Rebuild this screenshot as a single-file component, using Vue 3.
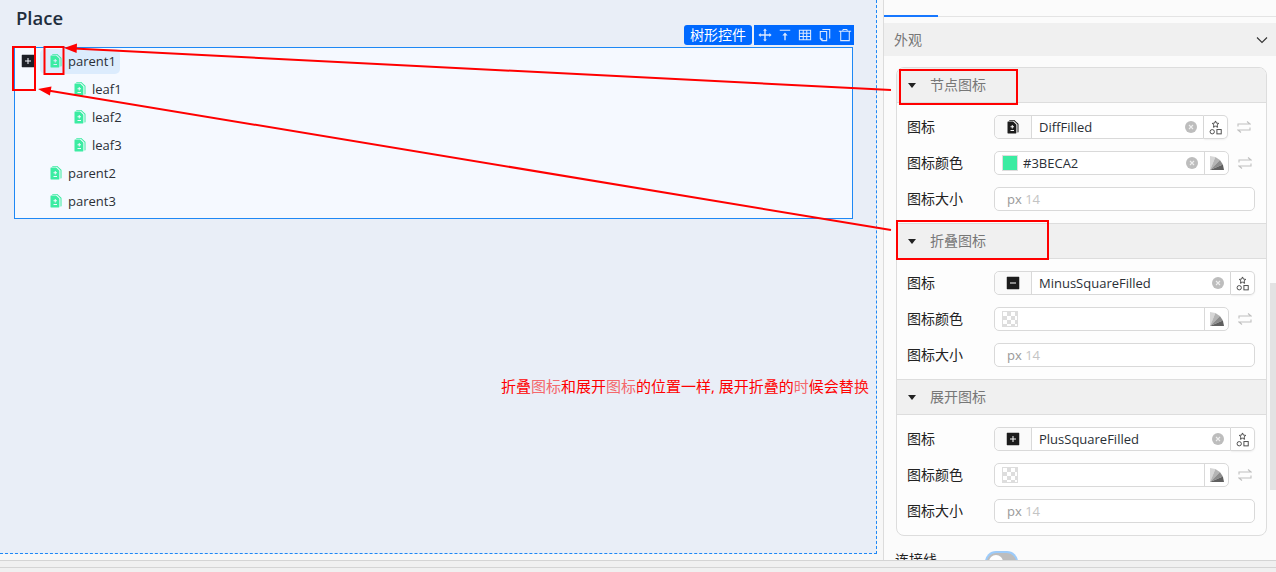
<template>
  <div class="page">
    <div class="main">
      <div class="canvas">
        <h1 class="title">Place</h1>
        <div class="tree">
          <div class="tree-tools">
            <span class="tree-name">树形控件</span>
            <div class="tool-btns">
              <svg v-for="t in tools" :key="t" viewBox="0 0 16 16" class="tool"><path :d="t" /></svg>
            </div>
          </div>
          <div v-for="node in nodes" :key="node.label" class="tree-row" :class="{ leaf: node.leaf }">
            <span class="switcher">
              <svg v-if="node.open" viewBox="64 64 896 896"><path :d="icons.plus" /></svg>
            </span>
            <span class="node" :class="{ selected: node.open }">
              <svg viewBox="64 64 896 896" class="node-icon"><path fill-rule="evenodd" :d="icons.diff" /></svg>
              {{ node.label }}
            </span>
          </div>
        </div>
        <p class="note">
          <b>折叠</b><span class="pale">图标</span><b>和展开</b><span class="pale">图标</span><b>的位置一样, 展开折叠的</b><span class="pale">时</span><b>候会替</b>换
        </p>
      </div>

      <div class="panel">
        <div class="tabs"><span class="tab-on"></span></div>
        <div class="section">
          <span>外观</span>
          <svg viewBox="0 0 12 12" class="chevron"><path d="M1 3.500l5 5 5-5" /></svg>
        </div>
        <div class="card">
          <div v-for="g in groups" :key="g.title" class="group">
            <div class="group-head"><i class="caret"></i><span>{{ g.title }}</span></div>
            <div class="group-body">
              <div class="row">
                <label>图标</label>
                <div class="input-group" :class="{ wide: !g.swap }">
                  <div class="field">
                    <span class="addon">
                      <svg viewBox="64 64 896 896"><path fill-rule="evenodd" :d="g.icon" /></svg>
                    </span>
                    <span class="value">{{ g.name }}</span>
                    <svg viewBox="0 0 12 12" class="clear"><circle cx="6" cy="6" r="6" /><path d="M4 4l4 4M8 4l-4 4" /></svg>
                  </div>
                  <span class="pick">
                    <svg viewBox="0 0 16 16" class="shapes">
                      <path d="M8 1l1 2.300 2.500.3-1.800 1.700.5 2.500L8 6.600 5.800 7.800l.5-2.500-1.800-1.700 2.500-.3z" />
                      <circle cx="4.500" cy="12.500" r="2.300" />
                      <rect x="9.500" y="10.200" width="4.600" height="4.600" />
                    </svg>
                  </span>
                </div>
                <svg v-if="g.swap" viewBox="0 0 14 14" class="swap"><path d="M1 6.500V4h12L10 1.500M13 7.500V10H1l3 2.500" /></svg>
              </div>
              <div class="row">
                <label>图标颜色</label>
                <div class="color-input">
                  <span class="swatch" :class="{ empty: !g.color }" :style="g.color ? { background: g.color } : null"></span>
                  <span class="value">{{ g.color }}</span>
                  <svg v-if="g.color" viewBox="0 0 12 12" class="clear"><circle cx="6" cy="6" r="6" /><path d="M4 4l4 4M8 4l-4 4" /></svg>
                  <span class="fan">
                    <svg viewBox="0 0 14 14">
                      <path fill="#d6d6d6" d="M0 14V0l5.400 1.100z" />
                      <path fill="#b4b4b4" d="M0 14L5.400 1.100 9.900 4.100z" />
                      <path fill="#8c8c8c" d="M0 14L9.900 4.100 12.900 8.600z" />
                      <path fill="#5f5f5f" d="M0 14L12.900 8.600 14 14z" />
                    </svg>
                  </span>
                </div>
                <svg viewBox="0 0 14 14" class="swap"><path d="M1 6.500V4h12L10 1.500M13 7.500V10H1l3 2.500" /></svg>
              </div>
              <div class="row">
                <label>图标大小</label>
                <div class="size-input">px <em>14</em></div>
              </div>
            </div>
          </div>
        </div>
        <div class="row link-row">
          <label>连接线</label>
          <span class="toggle"><i></i></span>
        </div>
        <span class="scrollbar"></span>
      </div>
    </div>
    <div class="footer"></div>

    <!-- 标注层 -->
    <svg class="marks" viewBox="0 0 1276 572">
      <g fill="none" stroke="#f00" stroke-width="2">
        <rect x="13" y="47" width="22" height="43" />
        <rect x="44.500" y="47" width="19" height="27" />
        <rect x="900" y="70" width="117" height="34" />
        <rect x="897" y="221" width="151" height="38" />
        <path d="M891 90L74 48.500M891 230L48 90.500" />
      </g>
      <path fill="#f00" d="M64 48l13-4.500-.4 9.500zM38 89l13.500-2.500-1.600 9z" />
    </svg>
  </div>
</template>

<script setup>
const icons = {
  plus: 'M880 112H144c-17.700 0-32 14.300-32 32v736c0 17.700 14.300 32 32 32h736c17.700 0 32-14.300 32-32V144c0-17.700-14.300-32-32-32zM704 536c0 4.400-3.600 8-8 8H544v152c0 4.400-3.600 8-8 8h-48c-4.400 0-8-3.600-8-8V544H328c-4.400 0-8-3.600-8-8v-48c0-4.400 3.600-8 8-8h152V328c0-4.400 3.600-8 8-8h48c4.400 0 8 3.600 8 8v152h152c4.400 0 8 3.600 8 8v48z',
  minus: 'M880 112H144c-17.700 0-32 14.300-32 32v736c0 17.700 14.300 32 32 32h736c17.700 0 32-14.300 32-32V144c0-17.700-14.300-32-32-32zM704 536c0 4.400-3.600 8-8 8H328c-4.400 0-8-3.600-8-8v-48c0-4.400 3.600-8 8-8h368c4.400 0 8 3.600 8 8v48z',
  diff: 'M296 64h293c8 0 16 3 22 9l243 234c6 6 10 14 10 22v495c0 18-14 32-32 32h-32V352c0-8-3-16-9-22L560 118c-6-6-14-9-22-9H264V96c0-18 14-32 32-32zM192 160h320c8 0 16 3 22 9l182 176c6 6 10 14 10 22v525c0 18-14 32-32 32H192c-18 0-32-14-32-32V192c0-18 14-32 32-32zM432 392v72h-72c-4 0-8 4-8 8v48c0 4 4 8 8 8h72v72c0 4 4 8 8 8h48c4 0 8-4 8-8v-72h72c4 0 8-4 8-8v-48c0-4-4-8-8-8h-72v-72c0-4-4-8-8-8h-48c-4 0-8 4-8 8zM360 704c-4 0-8 4-8 8v48c0 4 4 8 8 8h208c4 0 8-4 8-8v-48c0-4-4-8-8-8z',
}

const tools = [
  'M8 .5l2.200 2.500H8.800v4.200H13V5.800L15.500 8 13 10.200V8.800H8.800V13h1.400L8 15.500 5.800 13h1.400V8.800H3v1.400L.5 8 3 5.800v1.400h4.200V3H5.800z',
  'M2 2h12v1.200H2zM8 5l3 3.500H8.800V14H7.200V8.500H5z',
  'M1 2h14v12H1zM2.200 3.200v2.200h3.200V3.200zm4.400 0v2.200h2.800V3.200zm4 0v2.200h3.200V3.200zM2.200 6.600v2.600h3.200V6.600zm4.400 0v2.600h2.800V6.600zm4 0v2.600h3.200V6.600zM2.200 10.400v2.400h3.200v-2.400zm4.400 0v2.400h2.800v-2.400zm4 0v2.400h3.200v-2.400z',
  'M5 1h9v11h-1.200V2.200H5zM2 3.500h8.500V15H4.500L2 12.500zm1.200 1.200v7h2v2h4.100v-9z',
  'M5.500 1h5l.6 2H15v1.200h-1.500V15h-11V4.200H1V3h3.900zm.7 1.200l-.2.800h4l-.2-.8zM3.700 4.200v9.600h8.600V4.200z',
]

const nodes = [
  { label: 'parent1', open: true },
  { label: 'leaf1', leaf: true },
  { label: 'leaf2', leaf: true },
  { label: 'leaf3', leaf: true },
  { label: 'parent2' },
  { label: 'parent3' },
]

const groups = [
  { title: '节点图标', name: 'DiffFilled', icon: icons.diff, color: '#3BECA2', swap: true },
  { title: '折叠图标', name: 'MinusSquareFilled', icon: icons.minus, color: '', swap: false },
  { title: '展开图标', name: 'PlusSquareFilled', icon: icons.plus, color: '', swap: false },
]
</script>

<style scoped>
.page {
  position: relative;
  width: 1276px;
  height: 572px;
  overflow: hidden;
  background: #f7f7f7;
  color: #2a2f36;
  font-family: "Open Sans", "Noto Sans CJK SC", sans-serif;
  font-size: 13px;
}

.main {
  display: flex;
  height: 560px;
}

.canvas {
  position: relative;
  box-sizing: border-box;
  width: 877px;
  height: 554px;
  padding: 7px 23px 0 14px;
  flex: none;
  background: #e9eef7;
  border-right: 1px dashed #1e88f5;
  border-bottom: 1px dashed #1e88f5;
}

.title {
  height: 22px;
  margin: 0 0 18px 2px;
  font-size: 18.500px;
  line-height: 22px;
  font-weight: 600;
  color: #1f2d3d;
}

.tree {
  position: relative;
  height: 172px;
  box-sizing: border-box;
  border: 1px solid #1e88f5;
  background: #f5f9ff;
}

.tree-tools {
  position: absolute;
  right: -2px;
  top: -23px;
  display: flex;
  gap: 2px;
  height: 20px;
}

.tree-name {
  width: 68px;
  border-radius: 3px;
  background: #0069ff;
  color: #fff;
  font-size: 14px;
  line-height: 20px;
  text-align: center;
}

.tool-btns {
  display: flex;
  align-items: center;
  gap: 6px;
  padding: 0 2px 0 4px;
  background: #0069ff;
}

.tool {
  width: 14px;
  height: 14px;
  fill: #dce9ff;
}

.tree-row {
  display: flex;
  align-items: center;
  box-sizing: border-box;
  height: 28px;
  padding-bottom: 2px;
  padding-left: 6px;
}

.tree-row.leaf {
  padding-left: 30px;
}

.switcher {
  display: flex;
  width: 14px;
  height: 14px;
  margin-right: 5px;
  fill: #1c1f26;
}

.tree-row.leaf .switcher {
  visibility: hidden;
}

.node {
  display: flex;
  align-items: center;
  gap: 5px;
  height: 25px;
  padding: 0 4px 0 9px;
  border-radius: 5px;
}

.node.selected {
  background: #dcecfd;
}

.node-icon {
  width: 14px;
  height: 14px;
  fill: #3beca2;
}

.note {
  position: absolute;
  left: 501px;
  top: 376px;
  margin: 0;
  font-size: 15px;
  line-height: 20px;
  color: #ff2020;
  white-space: nowrap;
}

.note b {
  font-weight: 400;
  color: #f00;
}

.note .pale {
  font-weight: 400;
  color: #f4686c;
}

.panel {
  position: relative;
  flex: 1;
  min-width: 0;
  margin-left: 6px;
  overflow: hidden;
  background: #fbfbfb;
  border-left: 1px solid #dcdcdc;
}

.tabs {
  display: flex;
  align-items: flex-end;
  height: 16px;
  border-bottom: 1px solid #e4e4e4;
}

.tab-on {
  width: 54px;
  height: 2px;
  margin-bottom: -1px;
  background: #1677ff;
}

.section {
  display: flex;
  align-items: center;
  justify-content: space-between;
  height: 33px;
  margin-top: 6px;
  padding: 0 8px 0 10px;
  background: #f0f0f0;
  color: #777;
  font-size: 14px;
}

.section > span {
  margin-top: -2px;
}

.chevron {
  width: 12px;
  height: 12px;
  fill: none;
  stroke: #333;
  stroke-width: 1.100;
}

.card {
  box-sizing: border-box;
  width: 371px;
  margin: 11px 0 16px 12px;
  border: 1px solid #ddd;
  border-radius: 8px;
  background: #fdfdfd;
  overflow: hidden;
}

.group + .group .group-head {
  border-top: 1px solid #ddd;
}

.group-head {
  display: flex;
  align-items: center;
  height: 34px;
  padding-left: 11px;
  border-bottom: 1px solid #ddd;
  background: #f0f0f0;
  color: #777;
  font-size: 14px;
}

.group-head span {
  margin: -2px 0 0 1px;
}

.caret {
  width: 0;
  height: 0;
  margin-right: 13px;
  border-left: 4px solid transparent;
  border-right: 4px solid transparent;
  border-top: 5px solid #222;
}

.group-body {
  display: flex;
  flex-direction: column;
  gap: 12px;
  padding: 12px 10px;
}

.row {
  display: flex;
  align-items: center;
  height: 24px;
}

.row label {
  width: 87px;
  flex: none;
  margin-top: -2px;
  font-size: 14px;
  color: #222;
}

.input-group {
  display: flex;
  width: 234px;
  height: 24px;
}

.input-group.wide {
  width: 261px;
}

.field {
  display: flex;
  align-items: center;
  flex: 1;
  box-sizing: border-box;
  border: 1px solid #d9d9d9;
  border-radius: 5px 0 0 5px;
  background: #fff;
}

.addon {
  display: flex;
  align-items: center;
  justify-content: center;
  width: 36px;
  height: 100%;
  margin-right: 7px;
  border-right: 1px solid #d9d9d9;
  background: #fafafa;
  border-radius: 5px 0 0 5px;
  fill: #1c1c1c;
}

.addon svg {
  width: 14px;
  height: 14px;
}

.value {
  flex: 1;
  color: #2a2f36;
}

.clear {
  width: 12px;
  height: 12px;
  margin-right: 6px;
  fill: #bdbdbd;
  stroke: #eee;
  stroke-width: 1.100;
}

.clear circle {
  stroke: none;
}

.pick {
  display: flex;
  align-items: center;
  justify-content: center;
  box-sizing: border-box;
  width: 24px;
  border: 1px solid #d9d9d9;
  border-left: 0;
  border-radius: 0 5px 5px 0;
  background: #fff;
  box-shadow: 0 1px 2px rgba(0, 0, 0, 0.06);
}

.shapes {
  width: 15px;
  height: 15px;
  fill: none;
  stroke: #444;
  stroke-width: 1;
}

.swap {
  width: 14px;
  height: 14px;
  margin-left: 9px;
  fill: none;
  stroke: #c0c0c0;
  stroke-width: 1.100;
}

.color-input {
  display: flex;
  align-items: center;
  box-sizing: border-box;
  width: 235px;
  height: 24px;
  padding-left: 7px;
  border: 1px solid #d9d9d9;
  border-radius: 5px;
  background: #fff;
}

.color-input .value {
  margin-left: 5px;
}

.swatch {
  box-sizing: border-box;
  width: 16px;
  height: 16px;
  border: 1px solid #ddd;
}

.swatch.empty {
  background: conic-gradient(#ddd 25%, #fff 0 50%, #ddd 0 75%, #fff 0) 0 0 / 8px 8px;
}

.fan {
  display: flex;
  align-items: center;
  justify-content: center;
  flex: none;
  width: 23px;
  height: 100%;
  margin-left: auto;
  border-left: 1px solid #d9d9d9;
}

.fan svg {
  width: 14px;
  height: 14px;
}

.size-input {
  box-sizing: border-box;
  width: 261px;
  height: 24px;
  padding-left: 12px;
  border: 1px solid #d9d9d9;
  border-radius: 5px;
  background: #fff;
  color: #999;
  line-height: 22px;
}

.size-input em {
  font-style: normal;
  color: #c4c4c4;
}

.link-row {
  align-items: flex-start;
  padding-left: 11px;
}

.link-row label {
  width: 92px;
  margin-top: 0;
  line-height: 16px;
}

.toggle {
  display: block;
  box-sizing: border-box;
  width: 29px;
  height: 18px;
  margin-top: 1px;
  padding: 2px;
  border-radius: 9px;
  background: #bdbdbd;
  box-shadow: 0 0 0 2px #9ccbfa;
}

.toggle i {
  display: block;
  width: 14px;
  height: 14px;
  border-radius: 50%;
  background: #fff;
}

.scrollbar {
  position: absolute;
  right: 0;
  top: 283px;
  width: 6px;
  height: 207px;
  background: #e3e3e3;
}

.footer {
  box-sizing: border-box;
  height: 12px;
  border-top: 1px solid #d4d4d4;
  background: linear-gradient(#f0f0f0 6px, #d4d4d4 6px, #d4d4d4 7px, #f0f0f0 7px);
}

.marks {
  position: absolute;
  inset: 0;
  width: 1276px;
  height: 572px;
  pointer-events: none;
}
</style>
